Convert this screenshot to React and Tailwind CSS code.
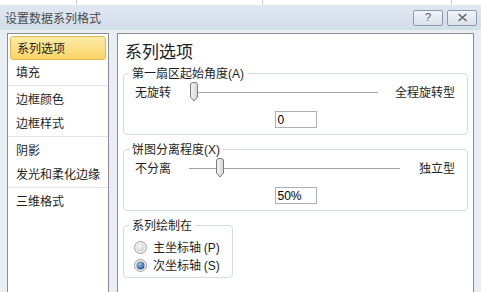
import React from "react";

const font = { fontFamily: '"Noto Sans CJK SC", "Noto Sans", sans-serif' };
const latin = { fontFamily: '"Liberation Sans", Arial, sans-serif' };

const Thumb = () => (
  <svg width="10" height="20" viewBox="0 0 10 20" className="block">
    <defs>
      <linearGradient id="th" x1="0" x2="1" y1="0" y2="0">
        <stop offset="0" stopColor="#f6f6f6" />
        <stop offset="1" stopColor="#d4d4d4" />
      </linearGradient>
    </defs>
    <path d="M1.5 3 Q1.5 0.5 4 0.5 L6 0.5 Q8.5 0.5 8.5 3 L8.5 15 L5 19 L1.5 15 Z" fill="url(#th)" stroke="#7a7a7a" />
  </svg>
);

const Slider = ({ left, right, thumbX, trackLeft, trackRight }) => (
  <div className="relative flex h-[20px] items-center justify-between pl-[11px] pr-[12px] text-[12px] leading-none text-[#1e1e1e]">
    <span>{left}</span>
    <span>{right}</span>
    <div className="absolute top-[10px] h-px bg-[#a3a3a3]" style={{ left: trackLeft, right: trackRight }} />
    <div className="absolute top-0" style={{ left: thumbX }}>
      <Thumb />
    </div>
  </div>
);

const Radio = ({ checked }) => (
  <svg width="13" height="13" viewBox="0 0 13 13">
    <defs>
      <radialGradient id={checked ? "rc" : "ru"} cx="0.4" cy="0.35" r="0.7">
        <stop offset="0" stopColor={checked ? "#9fc3e8" : "#fafafa"} />
        <stop offset="1" stopColor={checked ? "#1f4f86" : "#cfcfcf"} />
      </radialGradient>
    </defs>
    <circle cx="6.5" cy="6.5" r="6" fill="#f0f0f0" stroke="#a0a0a0" />
    <circle cx="6.5" cy="6.5" r="4" fill={`url(#${checked ? "rc" : "ru"})`} />
  </svg>
);

const Item = ({ children, active }) =>
  active ? (
    <div className="mx-[2px] mt-[2px] flex h-[24px] items-center rounded-[3px] border border-[#e1b94e] bg-gradient-to-b from-[#fdeba8] to-[#fbd666] pl-[6px] text-[12px] text-[#1e1e1e]">
      {children}
    </div>
  ) : (
    <div className="flex h-[24px] items-center whitespace-nowrap pl-[8px] text-[12px] text-[#1e1e1e]">{children}</div>
  );

const Sep = () => <div className="my-[1px] h-px bg-[#e4e4e4]" />;

const Legend = ({ children, className = "ml-[5px]" }) => (
  <legend className={`${className} px-[3px] text-[12px] leading-[16px] text-[#1e1e1e]`}>{children}</legend>
);

export default function App() {
  return (
    <div className="h-[292px] w-[481px] overflow-hidden bg-[#e9eef5]" style={font}>
      <div className="flex h-[5px] bg-white">
        <div className="w-[77px] border-r border-[#d0d0d0]" />
        <div className="w-[186px] border-r border-[#d0d0d0]" />
        <div className="w-[189px] border-r border-[#d0d0d0]" />
      </div>
      <div className="flex h-[25px] items-center justify-between bg-gradient-to-b from-[#dfe7f2] to-[#d3deeb] pl-[5px] pr-[4px]">
        <span className="text-[12px] text-[#4a4a4a]">设置数据系列格式</span>
        <div className="flex gap-[4px]">
          <div className="flex h-[16px] w-[30px] items-center justify-center rounded-[2px] border border-[#8e9aa8] bg-gradient-to-b from-[#f1f4f8] to-[#dbe2ec] text-[11px] leading-none text-[#555]" style={latin}>
            ?
          </div>
          <div className="flex h-[16px] w-[30px] items-center justify-center rounded-[2px] border border-[#8e9aa8] bg-gradient-to-b from-[#f1f4f8] to-[#dbe2ec]">
            <svg width="11" height="9" viewBox="0 0 11 9">
              <path d="M1.5 1 L9.5 8 M9.5 1 L1.5 8" stroke="#666" strokeWidth="1.6" fill="none" />
            </svg>
          </div>
        </div>
      </div>
      <div className="flex h-[262px] gap-[8px] pl-[7px] pt-[3px]">
        <div className="w-[102px] border border-b-0 border-[#8c8c8c] bg-white">
          <Item active>系列选项</Item>
          <Item>填充</Item>
          <Sep />
          <Item>边框颜色</Item>
          <Item>边框样式</Item>
          <Sep />
          <Item>阴影</Item>
          <Item>发光和柔化边缘</Item>
          <Sep />
          <Item>三维格式</Item>
        </div>
        <div className="w-[357px] border border-b-0 border-[#8c8c8c] bg-white px-[5px]">
          <div className="pl-[2px] pt-[7px] text-[17px] leading-[20px] text-[#1e1e1e]">系列选项</div>
          <fieldset className="mt-[4px] rounded-[4px] border border-[#d5dbe3] pb-[6px]">
            <Legend>
              第一扇区起始角度<span style={latin}>(A)</span>
            </Legend>
            <Slider left="无旋转" right="全程旋转型" thumbX={65} trackLeft={70} trackRight={89} />
            <div className="mt-[9px] flex justify-center">
              <div className="flex h-[17px] w-[42px] items-center border border-[#aab2bd] bg-white pl-[2px] text-[12px] leading-none" style={latin}>
                0
              </div>
            </div>
          </fieldset>
          <fieldset className="mt-[6px] rounded-[4px] border border-[#d5dbe3] pb-[6px]">
            <Legend>
              饼图分离程度<span style={latin}>(X)</span>
            </Legend>
            <Slider left="不分离" right="独立型" thumbX={91} trackLeft={65} trackRight={67} />
            <div className="mt-[9px] flex justify-center">
              <div className="flex h-[17px] w-[42px] items-center border border-[#aab2bd] bg-white pl-[2px] text-[12px] leading-none" style={latin}>
                50%
              </div>
            </div>
          </fieldset>
          <fieldset className="mt-[6px] w-[110px] rounded-[4px] border border-[#d5dbe3] pb-[3px] pl-[10px]">
            <Legend className="ml-[-5px]">系列绘制在</Legend>
            <div className="mt-[5px] flex h-[18px] items-center gap-[6px] text-[12px] text-[#1e1e1e]">
              <Radio />
              <span>
                主坐标轴 <span style={latin}>(P)</span>
              </span>
            </div>
            <div className="flex h-[18px] items-center gap-[6px] text-[12px] text-[#1e1e1e]">
              <Radio checked />
              <span>
                次坐标轴 <span style={latin}>(S)</span>
              </span>
            </div>
          </fieldset>
        </div>
      </div>
    </div>
  );
}
